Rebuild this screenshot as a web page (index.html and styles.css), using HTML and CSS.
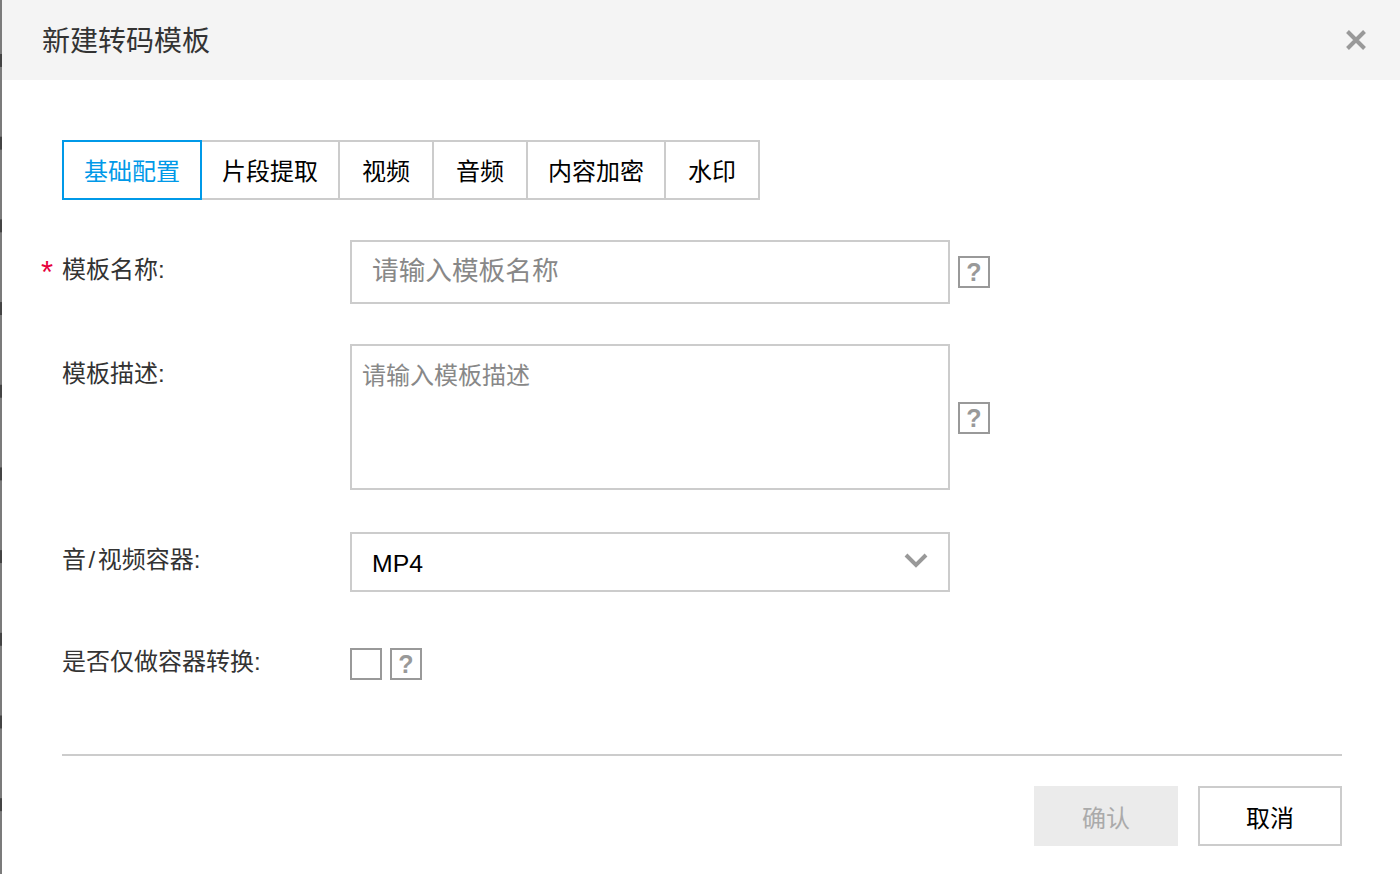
FILE: index.html
```html
<!DOCTYPE html>
<html lang="zh-CN">
<head>
<meta charset="utf-8">
<title>新建转码模板</title>
<link rel="stylesheet" href="styles.css">
</head>
<body>
<div class="page">
  <div class="backdrop"></div>
  <div class="dialog">
    <header class="head">
      <h1 class="title">新建转码模板</h1>
      <svg class="close" width="22" height="22" viewBox="0 0 22 22"><path d="M2.5 2.5L19.5 19.5M19.5 2.5L2.5 19.5" fill="none" stroke="#999" stroke-width="4"/></svg>
    </header>
    <main class="body">
      <nav class="tabs">
        <a class="tab active">基础配置</a>
        <a class="tab">片段提取</a>
        <a class="tab">视频</a>
        <a class="tab">音频</a>
        <a class="tab">内容加密</a>
        <a class="tab">水印</a>
      </nav>
      <div class="row row-name">
        <label class="label"><span class="req">*</span>模板名称:</label>
        <div class="input name-input">请输入模板名称</div>
        <span class="help">?</span>
      </div>
      <div class="row row-desc">
        <label class="label">模板描述:</label>
        <div class="input textarea">请输入模板描述</div>
        <span class="help">?</span>
      </div>
      <div class="row row-select">
        <label class="label">音<span class="slash">/</span>视频容器:</label>
        <div class="input select">
          <span class="value">MP4</span>
          <svg class="chevron" width="24" height="16" viewBox="0 0 24 16"><path d="M2 3L12 13L22 3" fill="none" stroke="#999" stroke-width="4"/></svg>
        </div>
      </div>
      <div class="row row-check">
        <label class="label">是否仅做容器转换:</label>
        <span class="checkbox"></span>
        <span class="help">?</span>
      </div>
      <div class="foot">
        <button class="btn disabled">确认</button>
        <button class="btn">取消</button>
      </div>
    </main>
  </div>
</div>
</body>
</html>
```
FILE: styles.css
```css
* { box-sizing: border-box; }
html, body { margin: 0; padding: 0; height: 100%; overflow: hidden; background: #fff; }
body { font-family: "Liberation Sans", "Noto Sans CJK SC", sans-serif; color: #333; }
.page { display: flex; width: 1400px; height: 874px; }
.backdrop {
  width: 2px;
  flex: none;
  background-color: #7b7b7b;
  background-image: linear-gradient(to bottom, #444 0 13px, transparent 13px);
  background-size: 2px 82.7px;
  background-repeat: repeat-y;
  background-position: 0 54px;
}
.dialog { flex: 1; display: flex; flex-direction: column; background: #fff; }
.head {
  height: 80px;
  flex: none;
  background: #f4f4f4;
  display: flex;
  align-items: center;
  justify-content: space-between;
  padding: 0 33px 0 40px;
}
.title { margin: 4px 0 0; font-size: 28px; font-weight: 400; color: #333; line-height: 40px; }
.body { padding: 60px 58px 0 60px; }
.tabs { display: flex; height: 60px; }
.tab {
  min-width: 96px;
  padding: 0 20px;
  margin-right: -2px;
  border: 2px solid #ccc;
  font-size: 24px;
  height: 60px;
  line-height: 60px;
  text-align: center;
  color: #000;
  background: #fff;
}
.tab.active { border-color: #0099e8; color: #0099e8; position: relative; z-index: 1; }
.row { display: flex; align-items: flex-start; }
.label { width: 288px; flex: none; font-size: 24px; line-height: 32px; color: #333; position: relative; }
.slash { padding: 0 2.6px; }
.req { position: absolute; left: -21px; top: 3px; color: #e6003c; font-size: 31px; }
.input { width: 600px; flex: none; border: 2px solid #ccc; background: #fff; color: #888; }
.help {
  width: 32px; height: 32px; flex: none;
  border: 2px solid #999;
  color: #999;
  font-size: 25px;
  font-weight: 700;
  line-height: 29px;
  text-align: center;
  margin-left: 8px;
}
.row-name { margin-top: 40px; }
.row-name .label { margin-top: 14px; }
.name-input { height: 64px; font-size: 26.67px; line-height: 58px; padding-left: 20px; }
.row-name .help { margin-top: 16px; }
.row-desc { margin-top: 40px; }
.row-desc .label { margin-top: 14px; }
.textarea { height: 146px; font-size: 24px; line-height: 32px; padding: 14px 10px; }
.row-desc .help { margin-top: 58px; }
.row-select { margin-top: 42px; }
.row-select .label { margin-top: 12px; }
.select {
  height: 60px;
  display: flex;
  align-items: center;
  justify-content: space-between;
  padding: 0 20px;
  color: #000;
  font-size: 24.8px;
}
.value { margin-top: 3px; }
.chevron { margin-top: -4px; }
.row-check { margin-top: 56px; }
.row-check .label { margin-top: -2px; }
.checkbox { width: 32px; height: 32px; flex: none; border: 2px solid #999; background: #fff; }
.foot {
  margin-top: 74px;
  border-top: 2px solid #ccc;
  padding-top: 30px;
  display: flex;
  justify-content: flex-end;
  gap: 20px;
}
.btn {
  width: 144px;
  height: 60px;
  border: 2px solid #ccc;
  background: #fff;
  color: #000;
  font: inherit;
  font-size: 24px;
  padding: 0;
}
.btn.disabled { background: #ebebeb; border-color: #ebebeb; color: #aaa; }
```
